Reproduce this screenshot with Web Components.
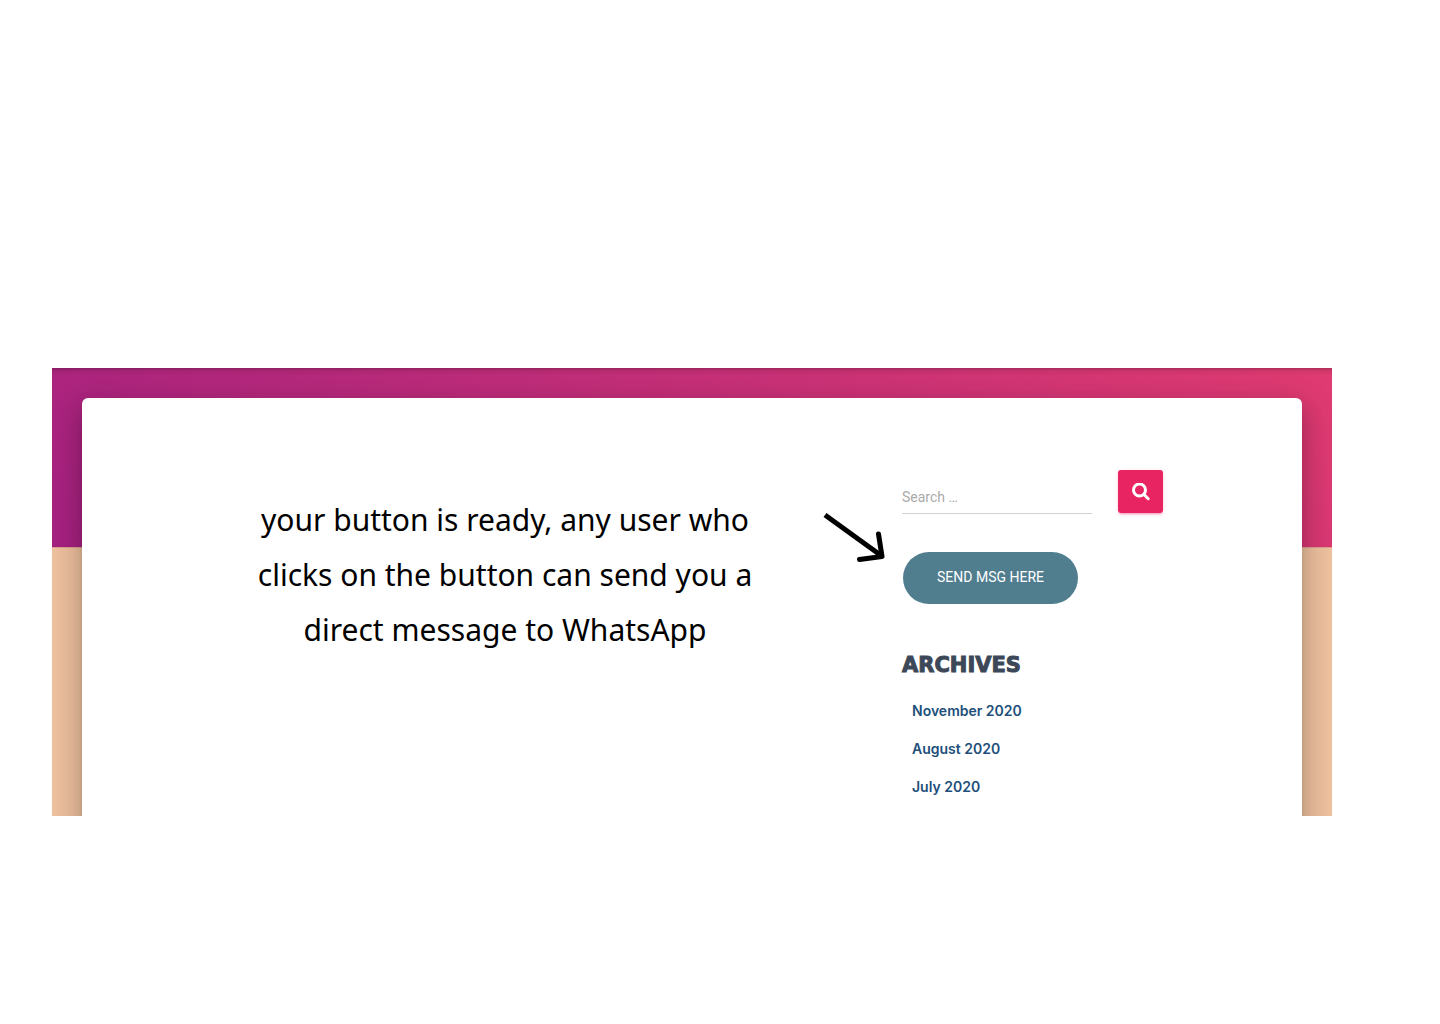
<!DOCTYPE html>
<html lang="en">
<head>
<meta charset="utf-8">
<meta name="viewport" content="width=device-width, initial-scale=1">
<title>Send a direct message</title>
<style>
body { margin: 0; background: #fff; font-family: Roboto, "Noto Sans", sans-serif; }
</style>
</head>
<body>
<blog-page>
  <page-note slot="main">your button is ready, any user who clicks on the button can send you a direct message to WhatsApp</page-note>
  <pointer-arrow slot="pointer"></pointer-arrow>
  <search-form slot="side"></search-form>
  <message-button slot="side">SEND MSG HERE</message-button>
  <archive-list slot="side" heading="ARCHIVES">
    <archive-item>November 2020</archive-item>
    <archive-item>August 2020</archive-item>
    <archive-item>July 2020</archive-item>
  </archive-list>
</blog-page>

<script>
class BaseElement extends HTMLElement {
  connectedCallback() {
    if (this.shadowRoot) return;
    this.attachShadow({ mode: "open" }).innerHTML = this.render();
  }
}

customElements.define("blog-page", class extends BaseElement {
  render() {
    return `<style>
      :host { display: block; padding: 368px 108px 208px 52px; }
      .band {
        position: relative; overflow: hidden; padding: 30px 30px 0;
        background:
          linear-gradient(rgba(0,0,0,.22), rgba(0,0,0,.06) 3px, transparent 8px) top / 100% 8px no-repeat,
          linear-gradient(#dd9e8c, #dd9e8c) 0 179px / 100% 1px no-repeat,
          linear-gradient(45deg, #a52180, #e03b71) top / 100% 179px no-repeat,
          #edc09e;
      }
      .card {
        display: flex; align-items: flex-start;
        margin-bottom: -80px; padding: 72px 139px 90px 158px;
        background: #fff; border-radius: 6px;
        box-shadow: 0 16px 24px 2px rgba(0,0,0,.14), 0 6px 30px 5px rgba(0,0,0,.12), 0 8px 10px -5px rgba(0,0,0,.2);
      }
      main { flex: 1; padding-top: 22px; }
      .pointer { padding: 40px 16px 0 52px; }
      aside { width: 261px; }
    </style>
    <div class="band"><div class="card">
      <main><slot name="main"></slot></main>
      <div class="pointer"><slot name="pointer"></slot></div>
      <aside><slot name="side"></slot></aside>
    </div></div>`;
  }
});

customElements.define("page-note", class extends BaseElement {
  render() {
    return `<style>
      :host { display: block; }
      p { margin: 0; font: 30px/55px "Noto Sans", sans-serif; color: #000; text-align: center; }
    </style><p><slot></slot></p>`;
  }
});

customElements.define("pointer-arrow", class extends BaseElement {
  render() {
    return `<style>:host, svg { display: block; }</style>
    <svg width="64" height="56" viewBox="0 0 64 56" fill="none" stroke="#000" aria-hidden="true">
      <path d="M3 5L59 45.500" stroke-width="5"/>
      <path d="M56.500 24L60 46.500L37.500 49.500" stroke-width="5" stroke-linecap="round" stroke-linejoin="round"/>
    </svg>`;
  }
});

customElements.define("search-form", class extends BaseElement {
  render() {
    return `<style>
      :host { display: block; }
      form { display: flex; justify-content: space-between; align-items: flex-start; margin: 0; }
      input {
        box-sizing: border-box; width: 190px; height: 36px; margin: 8px 0 0; padding: 2px 0 0;
        border: 0; border-bottom: 1px solid #d2d2d2; border-radius: 0; outline: 0;
        background: none; font: 14px/20px Roboto, sans-serif; color: #555;
      }
      input::placeholder { color: #aaa; opacity: 1; }
      button {
        display: grid; place-items: center; width: 45px; height: 43px; padding: 0;
        border: 0; border-radius: 3px; background: #e92463; color: #fff;
        box-shadow: 0 2px 2px rgba(233,30,99,.14), 0 1px 5px rgba(233,30,99,.12), 0 3px 1px -2px rgba(233,30,99,.2);
      }
    </style>
    <form role="search">
      <input type="search" placeholder="Search …" aria-label="Search">
      <button type="button" aria-label="Search">
        <svg width="18" height="18" viewBox="0 0 18 18" fill="none" stroke="currentColor" stroke-width="3" stroke-linecap="round">
          <circle cx="7.500" cy="7" r="6"/><path d="M12 11.500L16.200 15.700"/>
        </svg>
      </button>
    </form>`;
  }
});

customElements.define("message-button", class extends BaseElement {
  render() {
    return `<style>
      :host { display: block; padding: 38px 1px 0; }
      button {
        display: block; width: 175px; height: 52px; padding: 0 0 2px;
        border: 0; border-radius: 26px; background: #517e8f; color: #fff;
        font: 14px/20px Roboto, sans-serif;
      }
    </style><button type="button"><slot></slot></button>`;
  }
});

customElements.define("archive-list", class extends BaseElement {
  render() {
    return `<style>
      :host { display: block; padding-top: 48px; }
      h2 { margin: 0 0 14px; font: 900 21px/26px "DejaVu Sans", sans-serif; color: #3c4858; -webkit-text-stroke: 1px #3c4858; }
      div { padding-left: 10px; }
    </style><h2>${this.getAttribute("heading")}</h2><div role="list"><slot></slot></div>`;
  }
});

customElements.define("archive-item", class extends BaseElement {
  connectedCallback() {
    this.setAttribute("role", "listitem");
    super.connectedCallback();
  }
  render() {
    return `<style>
      :host { display: block; }
      a { display: block; font: 600 14px/38px Inter, sans-serif; color: #214f7b; text-decoration: none; }
    </style><a href="#"><slot></slot></a>`;
  }
});
</script>
</body>
</html>
